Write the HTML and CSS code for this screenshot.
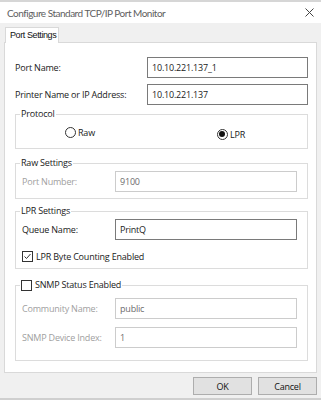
FILE: index.html
```html
<!DOCTYPE html>
<html lang="en">
<head>
    <meta charset="UTF-8">
    <meta name="viewport" content="width=device-width, initial-scale=1.0">
    <title>Configure Standard TCP/IP Port Monitor</title>
    <link rel="stylesheet" href="styles.css">
</head>
<body>

    <div class="window">
        <div class="titlebar">
            <span class="title">Configure Standard TCP/IP Port Monitor</span>
            <svg class="close" width="9" height="9" viewBox="0 0 9 9">
                <path d="M0.5 0.5 L8.5 8.5 M8.5 0.5 L0.5 8.5" stroke="#444" stroke-width="1" fill="none"/>
            </svg>
        </div>

        <div class="content">
            <div class="tabs">
                <div class="tab">Port Settings</div>
            </div>

            <div class="panel">
                <div class="row">
                    <label>Port Name:</label>
                    <div class="field wide">10.10.221.137_1</div>
                </div>
                <div class="row second">
                    <label>Printer Name or IP Address:</label>
                    <div class="field wide">10.10.221.137</div>
                </div>

                <fieldset class="group protocol">
                    <legend>Protocol</legend>
                    <div class="radios">
                        <span class="radio"><i class="dot"></i>Raw</span>
                        <span class="radio lpr"><i class="dot on"></i>LPR</span>
                    </div>
                </fieldset>

                <fieldset class="group raw">
                    <legend>Raw Settings</legend>
                    <div class="row">
                        <label class="off">Port Number:</label>
                        <div class="field off">9100</div>
                    </div>
                </fieldset>

                <fieldset class="group lpr-set">
                    <legend>LPR Settings</legend>
                    <div class="row">
                        <label>Queue Name:</label>
                        <div class="field">PrintQ</div>
                    </div>
                    <div class="check counting">
                        <svg class="box" width="11" height="11" viewBox="0 0 11 11">
                            <rect x="0.5" y="0.5" width="10" height="10" fill="#fff" stroke="#333"/>
                            <path d="M2.5 5.5 L4.5 7.5 L8.5 3" stroke="#333" stroke-width="1" fill="none"/>
                        </svg>
                        LPR Byte Counting Enabled
                    </div>
                </fieldset>

                <fieldset class="group snmp">
                    <legend>
                        <span class="check">
                            <svg class="box" width="11" height="11" viewBox="0 0 11 11">
                                <rect x="0.5" y="0.5" width="10" height="10" fill="#fff" stroke="#333"/>
                            </svg>
                            SNMP Status Enabled
                        </span>
                    </legend>
                    <div class="row">
                        <label class="off">Community Name:</label>
                        <div class="field off">public</div>
                    </div>
                    <div class="row second">
                        <label class="off">SNMP Device Index:</label>
                        <div class="field off">1</div>
                    </div>
                </fieldset>
            </div>

            <div class="buttons">
                <button>OK</button>
                <button>Cancel</button>
            </div>
        </div>
    </div>

</body>
</html>
```

FILE: styles.css
```css
* {
    margin: 0;
    padding: 0;
    box-sizing: border-box;
}

body {
    background: #f0f0f0;
    font-family: "Open Sans", "Noto Sans", sans-serif;
    font-size: 9px;
    letter-spacing: -0.2px;
    color: #1a1a1a;
    width: 321px;
    height: 400px;
    overflow: hidden;
}

.window {
    border-top: 2px solid #d6d6d6;
    border-bottom: 2px solid #cfcfcf;
    height: 400px;
    display: flex;
    flex-direction: column;
}

/* Title bar */
.titlebar {
    height: 21px;
    background: #fff;
    display: flex;
    align-items: center;
    justify-content: space-between;
    padding: 0 7px 0 7px;
}

.title {
    font-family: Lato, "Open Sans", sans-serif;
    font-size: 10px;
    color: #606060;
    letter-spacing: -0.5px;
}

.content {
    flex: 1;
    padding: 4px 4px 0 4px;
}

/* Tabs */
.tabs {
    display: flex;
    padding-left: 1px;
}

.tab {
    position: relative;
    z-index: 1;
    width: 54px;
    height: 16px;
    margin-bottom: -1px;
    background: #fff;
    border: 1px solid #d9d9d9;
    border-bottom: none;
    font-family: "Liberation Sans", Arial, sans-serif;
    font-size: 9px;
    letter-spacing: -0.4px;
    color: #111;
    padding: 2px 0 0 4px;
}

.panel {
    width: 313px;
    height: 331px;
    background: #fff;
    border: 1px solid #d9d9d9;
    padding: 14px 8px 0 10px;
}

/* Rows */
.row {
    display: flex;
    align-items: center;
    height: 21px;
}

.row.second {
    margin-top: 6px;
}

.row label {
    flex: 1;
}

label.off {
    color: #a0a0a0;
}

.field {
    width: 182px;
    height: 21px;
    border: 1px solid #7a7a7a;
    background: #fff;
    padding: 0 4px;
    display: flex;
    align-items: center;
}

.field.wide {
    width: 161px;
}

.field.off {
    border-color: #cccccc;
    color: #6d6d6d;
}

/* Group boxes */
.group {
    border: 1px solid #dcdcdc;
    padding: 0 10px 0 6px;
}

.group legend {
    line-height: 12px;
    padding: 0 1px;
    margin-left: -2px;
}

.protocol {
    margin-top: 3px;
    padding: 6px 0 10px 0;
}

.protocol legend {
    margin-left: 4px;
}

.raw {
    margin-top: 8px;
    padding-top: 2px;
    padding-bottom: 6px;
}

.lpr-set {
    margin-top: 6px;
    padding-top: 2px;
    padding-bottom: 6px;
}

.snmp {
    margin-top: 10px;
    padding-top: 7px;
    padding-bottom: 12px;
}

.snmp .row.second {
    margin-top: 8px;
}

.snmp legend {
    margin-left: -2px;
}

/* Radio buttons */
.radios {
    display: flex;
    height: 12px;
    align-items: center;
}

.radio {
    display: flex;
    align-items: center;
    gap: 2px;
}

.radio:first-child {
    margin-left: 49px;
}

.radio.lpr {
    margin-left: 122px;
    position: relative;
    top: 2px;
}

.dot {
    width: 11px;
    height: 11px;
    border: 1px solid #333;
    border-radius: 50%;
    background: #fff;
    display: flex;
    align-items: center;
    justify-content: center;
}

.dot.on::after {
    content: "";
    width: 6px;
    height: 6px;
    border-radius: 50%;
    background: #111;
}

/* Checkboxes */
.check {
    display: flex;
    align-items: center;
    gap: 3px;
}

.check.counting {
    margin-top: 10px;
    height: 12px;
}

.box {
    flex: none;
}

/* Buttons */
.buttons {
    display: flex;
    justify-content: flex-end;
    gap: 6px;
    margin-top: 4px;
}

.buttons button {
    width: 59px;
    height: 18px;
    background: #e1e1e1;
    border: 1px solid #adadad;
    font-family: "Open Sans", "Noto Sans", sans-serif;
    font-size: 9px;
    letter-spacing: -0.2px;
    color: #111;
}
```
